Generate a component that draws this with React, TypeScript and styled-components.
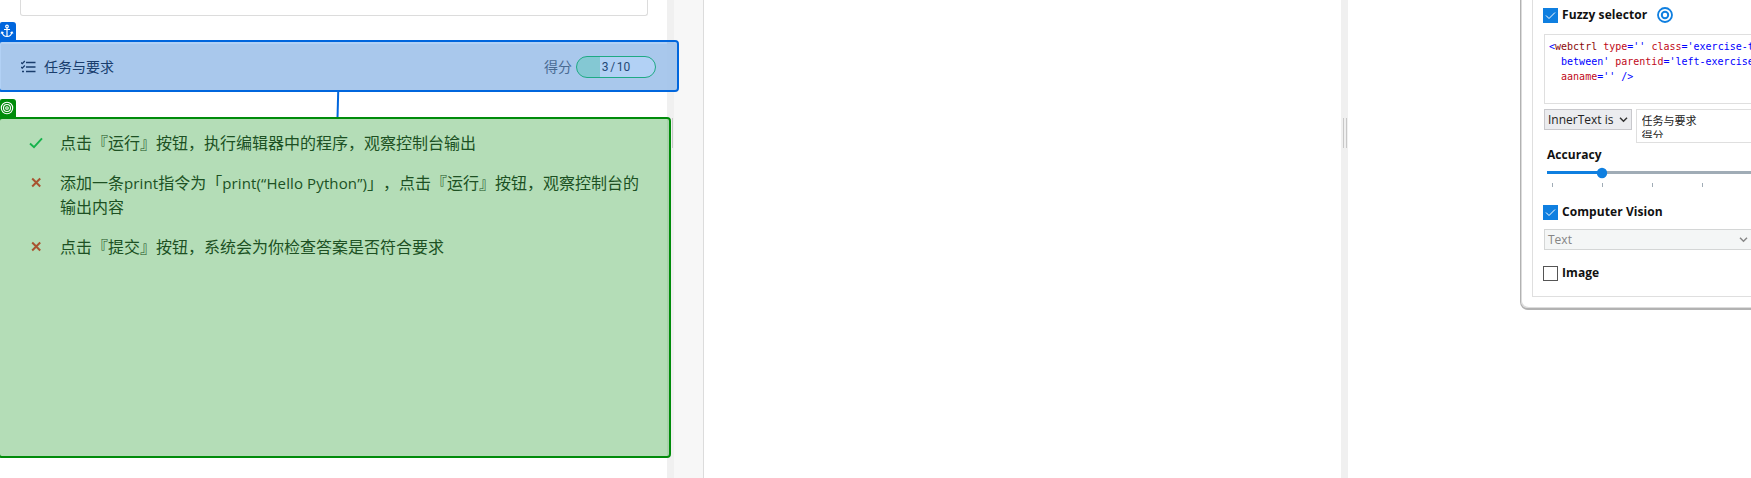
import React from 'react';
import styled, { createGlobalStyle } from 'styled-components';

const ui = `'Open Sans', 'Noto Sans CJK SC', sans-serif`;

const GlobalStyle = createGlobalStyle`
  * { box-sizing: border-box; }
  body { margin: 0; overflow: hidden; background: #fff; font-family: ${ui}; }
  p, ul { margin: 0; padding: 0; }
`;

const Page = styled.div`
  display: flex;
  height: 478px;
  overflow: hidden;
  position: relative;
`;

const Exercise = styled.main`
  width: 667px;
  flex: none;
  display: flex;
  flex-direction: column;
`;

const CardEnd = styled.div`
  height: 16px;
  margin: 0 19px 26px 20px;
  border: 1px solid #dcdcdc;
  border-top: 0;
  border-radius: 0 0 3px 3px;
`;

const TaskHeader = styled.header`
  position: relative;
  height: 46px;
  margin: 2px -10px 41px 1px;
  padding: 0 21px 0 20px;
  display: flex;
  align-items: center;
  background: linear-gradient(to right, #f3f3f3 666px, #f1f1f1 666px);
  font-size: 14px;
  line-height: 20px;
`;

const TaskTitle = styled.span`
  margin-left: 8px;
  flex: 1;
  color: #262b3c;
`;

const ScoreLabel = styled.span`
  color: #6a6d72;
  margin-right: 4px;
`;

const ScorePill = styled.div<{ $percent: number }>`
  width: 80px;
  height: 22px;
  border: 1px solid #2cc75e;
  border-radius: 11px;
  background: linear-gradient(to right, #bef3ce ${p => p.$percent}%, #fff ${p => p.$percent}%);
  text-align: center;
  font: 12px/20px Roboto, sans-serif;
  color: #333a48;
  word-spacing: -1.3px;
`;

const Tasks = styled.ul`
  list-style: none;
  display: flex;
  flex-direction: column;
  gap: 16px;
  padding: 0 0 0 29px;
`;

const Task = styled.li`
  display: flex;
  color: #2b382e;
  font-size: 16px;
  line-height: 24px;
`;

const Mark = styled.svg`
  width: 14px;
  height: 14px;
  margin: 5px 17px 0 0;
  flex: none;
  fill: none;
`;

const TaskText = styled.p`
  width: 590px;
  text-spacing-trim: space-all;
`;

const Latin = styled.span`
  font-size: 15px;
  letter-spacing: 0.12px;
`;

const Splitter = styled.div`
  width: 7px;
  flex: none;
  background: #f0f0f0;
  display: flex;
  justify-content: center;
  align-items: flex-start;
  gap: 2px;
  padding-top: 118px;
`;

const Grip = styled.i`
  width: 1px;
  height: 30px;
  background: #c8c8c8;
`;

const Gutter = styled.div`
  width: 30px;
  flex: none;
  background: #f7f7f7;
  border-right: 1px solid #dcdcdc;
`;

const Editor = styled.section`
  width: 637px;
  flex: none;
`;

const Side = styled.aside`
  flex: 1;
  min-width: 0;
  padding-left: 172px;
`;

const Dialog = styled.div`
  width: 300px;
  height: 310px;
  border: solid #b2b2b2;
  border-width: 0 1px 2px;
  box-shadow: inset 1px -1px 0 #dcdcdc;
  border-radius: 0 0 0 8px;
  padding: 0 0 12px 11px;
`;

const DialogBody = styled.div`
  height: 297px;
  border: 1px solid #dfdfdf;
  border-top: 0;
  padding: 8px 0 0 10px;
  color: #1a1a1a;
  font-size: 12px;
`;

const CheckRow = styled.label<{ $top?: number }>`
  display: flex;
  align-items: flex-start;
  height: 15px;
  margin-top: ${p => p.$top ?? 0}px;
  font-weight: 700;
  line-height: 13px;
  letter-spacing: 0.08px;
  color: #111;
`;

const Box = styled.span<{ $on?: boolean }>`
  width: 15px;
  height: 15px;
  margin-right: 4px;
  display: flex;
  border: 1px solid ${p => (p.$on ? '#0f7fe0' : '#555')};
  background: ${p => (p.$on ? '#0f7fe0' : '#fff')};
`;

const TargetIcon = styled.svg`
  margin: -1px 0 0 10px;
`;

const Code = styled.pre`
  width: 260px;
  height: 70px;
  margin: 11px 0 5px 1px;
  padding: 4px 0 0 4px;
  border: 1px solid #dfdfdf;
  font: 10px/15px 'DejaVu Sans Mono', monospace;
  color: #00f;
`;

const Tag = styled.span` color: #8b0a0a; `;
const Attr = styled.span` color: #c00818; `;

const Match = styled.div`
  display: flex;
  align-items: flex-start;
  gap: 4px;
  margin-left: 1px;
`;

const Picker = styled.div<{ $wide?: boolean }>`
  width: ${p => (p.$wide ? 208 : 88)}px;
  height: 21px;
  padding: 0 3px 0 3px;
  display: flex;
  align-items: center;
  justify-content: space-between;
  line-height: 17px;
  border: 1px solid ${p => (p.$wide ? '#d4d6d6' : '#c8c8cc')};
  background: ${p => (p.$wide ? '#f4f6f6' : '#ebecef')};
  color: ${p => (p.$wide ? '#858585' : '#222')};
`;

const PickerRow = styled.div`
  margin: 9px 0 0 1px;
`;

const InnerText = styled.div`
  width: 180px;
  height: 34px;
  padding: 3px 5px 0 4.500px;
  overflow: hidden;
  border: 1px solid #dfdfdf;
  font: 11px/15px 'Noto Sans CJK SC', sans-serif;
`;

const InnerLines = styled.div`
  height: 25px;
  overflow: hidden;
`;

const Heading = styled.div`
  margin: 4px 0 0 4px;
  font-weight: 700;
  line-height: 16px;
  letter-spacing: 0.06px;
  color: #111;
`;

const Slider = styled.svg`
  display: block;
  margin-left: 4px;
`;

const Highlight = styled.div<{ $color: string; $tint: string; $top: number; $w: number; $h: number }>`
  position: absolute;
  left: -2px;
  top: ${p => p.$top}px;
  width: ${p => p.$w}px;
  height: ${p => p.$h}px;
  border: 2px solid ${p => p.$color};
  border-radius: 4px;
  background: ${p => p.$tint};
  background-clip: padding-box;
`;

const Badge = styled.div<{ $color: string }>`
  position: absolute;
  left: 0;
  top: -20px;
  width: 16px;
  height: 19px;
  border-radius: 2px 3px 0 0;
  background: ${p => p.$color};
`;

const Connector = styled.svg`
  position: absolute;
  left: 334px;
  top: 92px;
`;

const Pass = () => (
  <Mark viewBox="0 0 14 14"><path d="M1 7.500l4 3.700L13 2.300" stroke="#20c468" strokeWidth="1.9" /></Mark>
);
const Fail = () => (
  <Mark viewBox="0 0 14 14"><path d="M3.200 2.500l8 8M11.200 2.500l-8 8" stroke="#ee3c40" strokeWidth="2" /></Mark>
);
const Tick = () => (
  <svg width="13" height="13" viewBox="0 0 13 13" fill="none"><path d="M2 6.5l3 3 6-6" stroke="#fff" /></svg>
);
const Chevron = ({ c }: { c: string }) => (
  <svg width="9" height="9" viewBox="0 0 9 9" fill="none"><path d="M1 2.8l3.5 3.5L8 2.8" stroke={c} strokeWidth="1.5" /></svg>
);

const App = () => (
  <>
    <GlobalStyle />
    <Page>
      <Exercise>
        <CardEnd />
        <TaskHeader>
          <svg width="15" height="14" viewBox="0 0 15 14" fill="none" stroke="#262b3c" strokeWidth="1.3">
            <path d="M5 2.5h9.500M5 7h9.500M5 11.5h9.500M0 2.5l1.3 1.2L3.8 1M0 7l1.3 1.2L3.8 5.5M1 11.5h2" />
          </svg>
          <TaskTitle>任务与要求</TaskTitle>
          <ScoreLabel>得分</ScoreLabel>
          <ScorePill $percent={30}>3 / 10</ScorePill>
        </TaskHeader>
        <Tasks>
          <Task><Pass /><TaskText>点击『运行』按钮，执行编辑器中的程序，观察控制台输出</TaskText></Task>
          <Task><Fail /><TaskText>添加一条<Latin>print</Latin>指令为「<Latin>print(“Hello Python”)</Latin>」，点击『运行』按钮，观察控制台的输出内容</TaskText></Task>
          <Task><Fail /><TaskText>点击『提交』按钮，系统会为你检查答案是否符合要求</TaskText></Task>
        </Tasks>
      </Exercise>
      <Splitter><Grip /><Grip /></Splitter>
      <Gutter />
      <Editor />
      <Splitter><Grip /><Grip /></Splitter>
      <Side>
        <Dialog>
          <DialogBody>
            <CheckRow>
              <Box $on><Tick /></Box>Fuzzy selector
              <TargetIcon width="16" height="16" viewBox="0 0 16 16" fill="none" stroke="#0f7fe0">
                <circle cx="8" cy="8" r="7" strokeWidth="1.8" /><circle cx="8" cy="8" r="3.2" strokeWidth="2" />
              </TargetIcon>
            </CheckRow>
            <Code>
              {'<'}<Tag>webctrl</Tag> <Attr>type</Attr>='' <Attr>class</Attr>='exercise-t{'\n'}
              {'  '}between' <Attr>parentid</Attr>='left-exercise{'\n'}
              {'  '}<Attr>aaname</Attr>='' /{'>'}
            </Code>
            <Match>
              <Picker>InnerText is<Chevron c="#333" /></Picker>
              <InnerText><InnerLines>任务与要求<br />得分</InnerLines></InnerText>
            </Match>
            <Heading>Accuracy</Heading>
            <Slider width="208" height="24" viewBox="0 0 208 24">
              <path d="M0 9.5h208" stroke="#a0acb6" strokeWidth="3" />
              <path d="M0 9.5h55" stroke="#0f7fe0" strokeWidth="3" />
              <circle cx="55" cy="10" r="5.2" fill="#0f7fe0" />
              <path d="M5.5 20v4.500M55.500 20v4M105.500 20v4M155.500 20v4" stroke="#a0acb6" />
            </Slider>
            <CheckRow $top={18}><Box $on><Tick /></Box>Computer Vision</CheckRow>
            <PickerRow><Picker $wide>Text<Chevron c="#888" /></Picker></PickerRow>
            <CheckRow $top={16}><Box />Image</CheckRow>
          </DialogBody>
        </Dialog>
      </Side>
      <Connector width="8" height="26"><path d="M4.200 0L3.500 26" stroke="#0066dd" strokeWidth="2" /></Connector>
      <Highlight $color="#0066dd" $tint="rgba(0,102,221,.3)" $top={40} $w={681} $h={52}>
        <Badge $color="#0066dd">
          <svg width="16" height="18" viewBox="0 0 16 18" fill="none" stroke="#fff" strokeWidth="1.2">
            <circle cx="7" cy="4.500" r="1.300" /><path d="M7 6v8.500M4 7.500h6M2 10c.5 3 2.500 4.500 5 4.500s4.500-1.500 5-4.500M1 11.500l1-1.500 1.500 1M13 11.500L12 10l-1.500 1" />
          </svg>
        </Badge>
      </Highlight>
      <Highlight $color="#008c0a" $tint="rgba(0,140,10,.295)" $top={117} $w={673} $h={341}>
        <Badge $color="#008c0a">
          <svg width="16" height="18" viewBox="0 0 16 18" fill="none" stroke="#fff" strokeWidth="1.1">
            <circle cx="7" cy="9" r="5.700" /><circle cx="7" cy="9" r="3.500" /><circle cx="7" cy="9" r="1.300" />
          </svg>
        </Badge>
      </Highlight>
    </Page>
  </>
);

export default App;
